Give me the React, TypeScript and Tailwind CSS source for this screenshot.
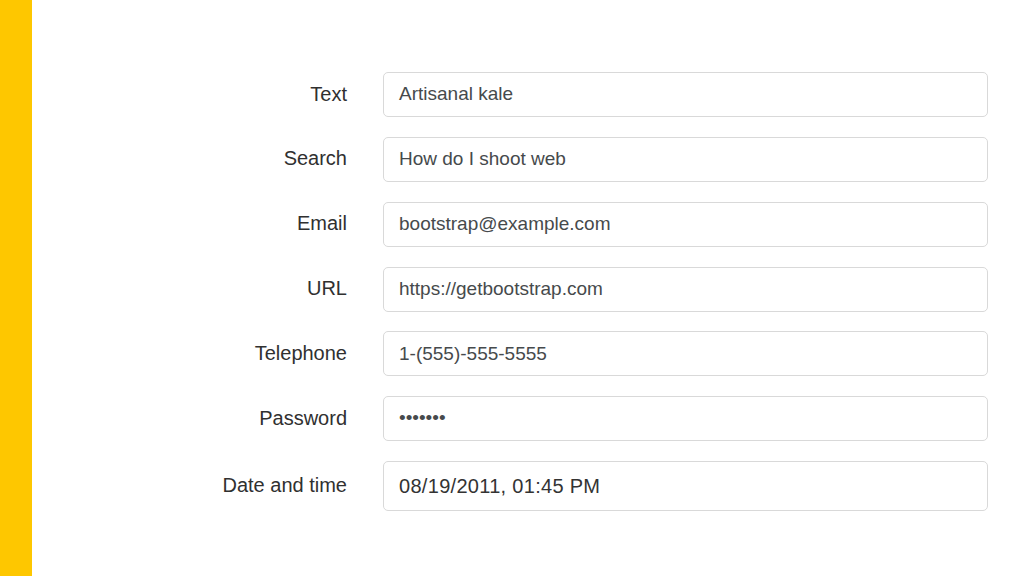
import React from 'react';

const fields = [
  { label: 'Text', value: 'Artisanal kale' },
  { label: 'Search', value: 'How do I shoot web' },
  { label: 'Email', value: 'bootstrap@example.com' },
  { label: 'URL', value: 'https://getbootstrap.com' },
  { label: 'Telephone', value: '1-(555)-555-5555' },
  { label: 'Password', value: '•••••••' },
];

const Row: React.FC<{ label: string; children: React.ReactNode }> = ({ label, children }) => (
  <div className="flex items-center">
    <div className="w-[347px] shrink-0 pb-[2px] text-right text-[20px] leading-none text-[#303030]">
      {label}
    </div>
    <div className="ml-[36px] w-[605px]">{children}</div>
  </div>
);

export default function App() {
  return (
    <div
      className="flex h-[576px] w-[1024px] bg-white"
      style={{ fontFamily: '"Liberation Sans", Arial, sans-serif' }}
    >
      <div className="w-[32px] shrink-0 bg-[#fec700]" />
      <div className="-ml-[32px] flex flex-1 flex-col gap-[19.85px] pt-[72px]">
        {fields.map((f) => (
          <Row key={f.label} label={f.label}>
            <div className="flex h-[45px] items-center rounded-[5px] border border-[#d9d9d9] pl-[15px] text-[19px] text-[#464a4c]">
              {f.value}
            </div>
          </Row>
        ))}
        <Row label="Date and time">
          <div className="flex h-[50px] items-center rounded-[5px] border border-[#d9d9d9] pl-[15px] text-[20px] tracking-[0.3px] text-[#333333]">
            08/19/2011, 01:45 PM
          </div>
        </Row>
      </div>
    </div>
  );
}
